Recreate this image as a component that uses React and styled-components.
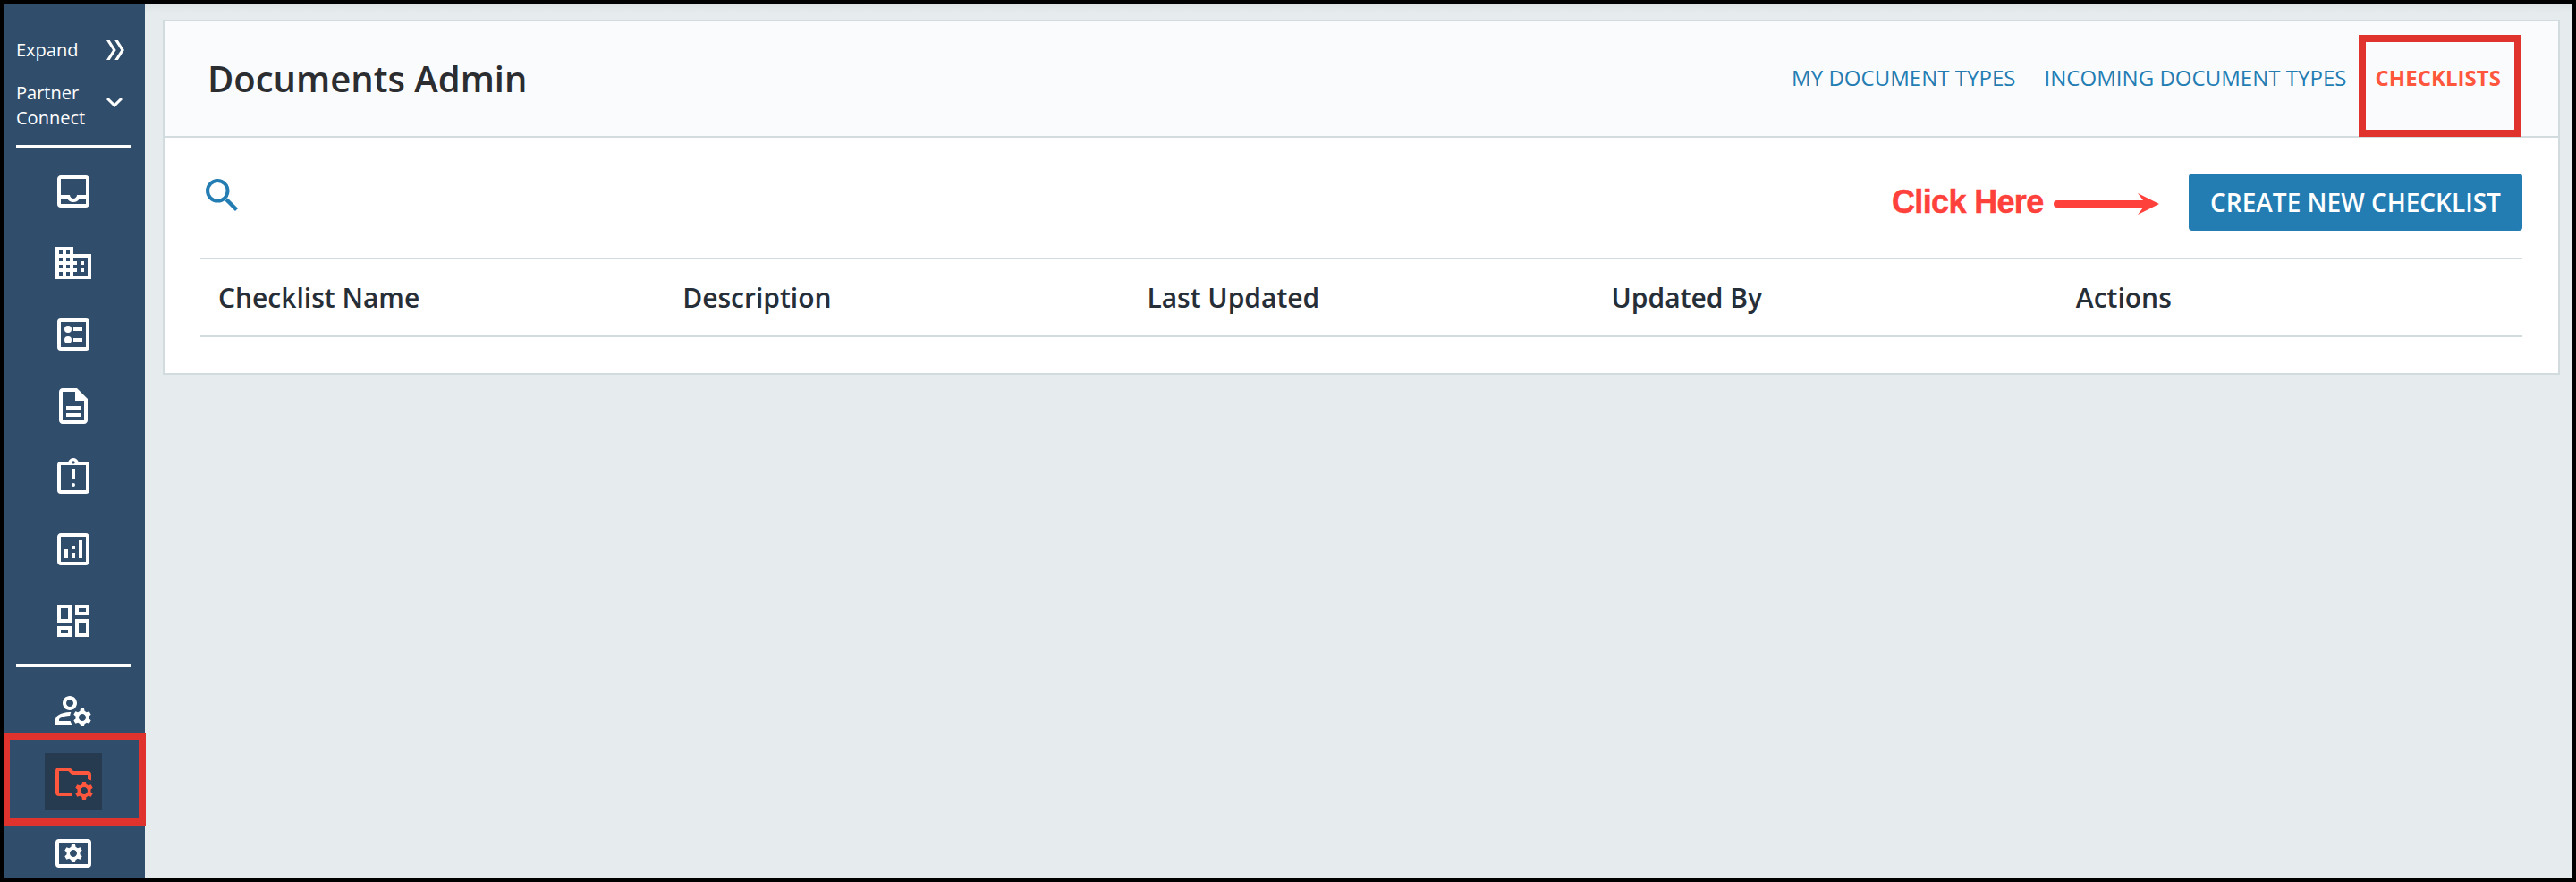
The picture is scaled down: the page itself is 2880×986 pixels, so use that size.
import React, { Component } from 'react';
import styled, { createGlobalStyle } from 'styled-components';
import {
  MdOutlineInbox,
  MdOutlineBusiness,
  MdOutlineDescription,
  MdOutlineAnalytics,
  MdOutlineDashboard,
  MdOutlineManageAccounts,
  MdExpandMore
} from 'react-icons/md';

// Styles
const GlobalStyle = createGlobalStyle`
  * {
    box-sizing: border-box;
  }

  body {
    margin: 0;
    font-family: 'Open Sans', 'Noto Sans', sans-serif;
  }
`;

const Wrapper = styled.div`
  position: relative;
  display: flex;
  width: 2880px;
  height: 986px;
  border: 4px solid #000;
  background: #e6ebee;
  overflow: hidden;
`;

const Sidebar = styled.div`
  display: flex;
  flex-direction: column;
  flex: none;
  width: 158px;
  padding: 38px 16px 0 14px;
  background: #304e6c;
  color: #fff;
`;

const SidebarRow = styled.div`
  display: flex;
  align-items: center;
  justify-content: space-between;
  flex: none;
  margin-bottom: ${props => props.$gap}px;
  padding-right: ${props => props.$inset}px;
  font-size: 20px;
  line-height: 28px;
`;

const CollapseIcon = styled(MdExpandMore)`
  margin-bottom: 8px;
`;

const Divider = styled.div`
  flex: none;
  height: 4px;
  background: #fff;
`;

const NavGroup = styled.div`
  display: flex;
  flex-direction: column;
  align-items: center;
  flex: none;
  gap: 16px;
  padding: 16px 0;
`;

const NavItem = styled.div`
  display: flex;
  align-items: center;
  justify-content: center;
  width: 64px;
  height: 64px;
  background: ${props => (props.$active ? '#263a50' : 'transparent')};
  color: ${props => (props.$active ? '#ff573d' : '#fff')};

  svg {
    width: 48px;
    height: 48px;
  }
`;

const Main = styled.div`
  flex: 1;
  padding: 18px 14px 0 20px;
  background: linear-gradient(#dce1e3, #e6ebee 10px);
`;

const Panel = styled.div`
  border: 2px solid #d2dcdf;
  background: #fff;
`;

const PanelHeader = styled.div`
  position: relative;
  display: flex;
  align-items: center;
  justify-content: space-between;
  height: 130px;
  padding: 0 64px 0 48px;
  border-bottom: 2px solid #d2dcdf;
  background: #fafbfd;
`;

const Title = styled.h1`
  margin: 0;
  padding-bottom: 2px;
  font-size: 40px;
  font-weight: 600;
  color: #2b2d31;
`;

const Tabs = styled.div`
  display: flex;
  gap: 32px;
  padding-bottom: 4px;
`;

const Tab = styled.a`
  font-size: 24px;
  font-weight: ${props => (props.$active ? 700 : 400)};
  color: ${props => (props.$active ? '#ff573d' : '#237db3')};
  letter-spacing: 0.03px;
  text-transform: uppercase;
`;

const PanelBody = styled.div`
  padding: 40px 40px 40px;
`;

const Toolbar = styled.div`
  display: flex;
  align-items: flex-start;
  height: 94px;
`;

const SearchButton = styled.div`
  flex: 1;
  color: #237db3;

  svg {
    display: block;
  }
`;

const Hint = styled.div`
  display: flex;
  align-items: center;
  height: 64px;
  margin-right: 33px;
  color: #ff413c;

  svg {
    margin-top: 4px;
  }
`;

const HintText = styled.span`
  width: 181px;
  font-family: 'Liberation Sans', sans-serif;
  font-size: 36px;
  font-weight: 700;
  letter-spacing: -0.65px;
  white-space: nowrap;
  -webkit-text-stroke: 0.5px #ff413c;
`;

const CreateButton = styled.div`
  display: flex;
  align-items: center;
  justify-content: center;
  width: 373px;
  height: 64px;
  border-radius: 4px;
  background: #237db3;
  color: #fff;
  font-size: 28px;
  font-weight: 600;
`;

const TableHead = styled.div`
  display: grid;
  grid-template-columns: repeat(5, 1fr);
  align-items: center;
  height: 89px;
  border-top: 2px solid #d2dcdf;
  border-bottom: 2px solid #d2dcdf;
`;

const HeadCell = styled.div`
  padding-left: 20px;
  font-size: 30px;
  font-weight: 600;
  color: #262e38;
`;

// Red frames that point the reader at a control
const Marker = styled.div`
  position: absolute;
  border: 8px solid #e0332e;
`;

const TabMarker = styled(Marker)`
  top: 15px;
  right: 41px;
  width: 182px;
  height: 114px;
`;

const SidebarMarker = styled(Marker)`
  top: 815px;
  left: -1px;
  width: 160px;
  height: 104px;
`;

// Icons
const GEAR =
  'M20.75 16c0-.22-.03-.42-.06-.63l1.14-1.01-1-1.73-1.45.49c-.32-.27-.68-.48-1.08-.63L18 11h-2l-.3 1.49c-.4.15-.76.36-1.08.63l-1.45-.49-1 1.73 1.14 1.01c-.03.21-.06.41-.06.63s.03.42.06.63l-1.14 1.01 1 1.73 1.45-.49c.32.27.68.48 1.08.63L16 21h2l.3-1.49c.4-.15.76-.36 1.08-.63l1.45.49 1-1.73-1.14-1.01c.03-.21.06-.41.06-.63zM17 18c-1.1 0-2-.9-2-2s.9-2 2-2 2 .9 2 2-.9 2-2 2z';

const BallotIcon = () => (
  <svg viewBox="0 0 24 24" fill="currentColor">
    <path
      fillRule="evenodd"
      d="M5 3h14a2 2 0 0 1 2 2v14a2 2 0 0 1-2 2H5a2 2 0 0 1-2-2V5a2 2 0 0 1 2-2zM5 5v14h14V5z"
    />
    <circle cx="9" cy="9" r="2" />
    <circle cx="9" cy="15" r="2" />
    <path d="M12 8h5v2h-5zM12 14h5v2h-5z" />
  </svg>
);

const AssignmentLateIcon = () => (
  <svg viewBox="0 0 24 24" fill="currentColor">
    <path
      fillRule="evenodd"
      d="M5 3h4.18C9.6 1.84 10.7 1 12 1s2.4.84 2.82 2H19a2 2 0 0 1 2 2v14a2 2 0 0 1-2 2H5a2 2 0 0 1-2-2V5a2 2 0 0 1 2-2zM5 5v14h14V5zM12 2.6a.85.85 0 1 0 0 1.7.85.85 0 0 0 0-1.7z"
    />
    <path d="M11 7h2v6h-2z" />
    <circle cx="12" cy="16" r="1" />
  </svg>
);

const FolderGearIcon = () => (
  <svg viewBox="0 0 24 24" fill="currentColor" overflow="visible">
    <path d="M4 4h6l2 2h8a2 2 0 0 1 2 2v3.3a6.5 6.5 0 0 0-2-.8V8h-8.83l-2-2H4v12h7.1c.06.7.2 1.37.45 2H4a2 2 0 0 1-2-2V6a2 2 0 0 1 2-2z" />
    <path d={GEAR} transform="translate(1 1)" />
  </svg>
);

const PanelGearIcon = () => (
  <svg viewBox="0 0 24 24" fill="currentColor">
    <path
      fillRule="evenodd"
      d="M4 4h16a2 2 0 0 1 2 2v12a2 2 0 0 1-2 2H4a2 2 0 0 1-2-2V6a2 2 0 0 1 2-2zM4 6v12h16V6z"
    />
    <path d={GEAR} transform="translate(-5 -4)" />
  </svg>
);

const DoubleChevron = () => (
  <svg width="20" height="22" viewBox="0 0 20 22" fill="currentColor">
    <path d="M0 0h3.7l7 11-7 11H0l7-11zM9.2 0h3.7l7 11-7 11H9.2l7-11z" />
  </svg>
);

const SearchIcon = () => (
  <svg width="48" height="48" viewBox="0 0 48 48" fill="none" stroke="currentColor">
    <circle cx="19.3" cy="19.3" r="11.3" strokeWidth="4" />
    <path d="M29 29l11.5 11.5" strokeWidth="4.4" />
  </svg>
);

const Arrow = () => (
  <svg width="118" height="24" viewBox="0 0 118 24" fill="currentColor">
    <path d="M4 8h96l-6-8 24 12-24 12 6-8H4a4 4 0 0 1 0-8z" />
  </svg>
);

const mainNav = [
  { id: 'inbox', icon: MdOutlineInbox },
  { id: 'business', icon: MdOutlineBusiness },
  { id: 'ballot', icon: BallotIcon },
  { id: 'description', icon: MdOutlineDescription },
  { id: 'late', icon: AssignmentLateIcon },
  { id: 'analytics', icon: MdOutlineAnalytics },
  { id: 'dashboard', icon: MdOutlineDashboard }
];

const adminNav = [
  { id: 'accounts', icon: MdOutlineManageAccounts },
  { id: 'documents', icon: FolderGearIcon },
  { id: 'settings', icon: PanelGearIcon }
];

const tabs = ['My Document Types', 'Incoming Document Types', 'Checklists'];

const columns = [
  'Checklist Name',
  'Description',
  'Last Updated',
  'Updated By',
  'Actions'
];

class App extends Component {
  constructor(props) {
    super(props);

    this.state = {
      activeNav: 'documents',
      activeTab: 'Checklists'
    };
  }

  NavLink = ({ id, icon: Icon }) => {
    const { activeNav } = this.state;
    return (
      <NavItem
        key={id}
        $active={activeNav === id}
        onClick={() => this.setState({ activeNav: id })}
      >
        <Icon />
      </NavItem>
    );
  };

  render() {
    const { activeTab } = this.state;

    return (
      <Wrapper>
        <GlobalStyle />
        <Sidebar>
          <SidebarRow $gap={20} $inset={7}>
            Expand
            <DoubleChevron />
          </SidebarRow>
          <SidebarRow $gap={16} $inset={0}>
            <span>
              Partner
              <br />
              Connect
            </span>
            <CollapseIcon size={36} />
          </SidebarRow>
          <Divider />
          <NavGroup>{mainNav.map(this.NavLink)}</NavGroup>
          <Divider />
          <NavGroup>{adminNav.map(this.NavLink)}</NavGroup>
        </Sidebar>

        <Main>
          <Panel>
            <PanelHeader>
              <Title>Documents Admin</Title>
              <Tabs>
                {tabs.map(tab => (
                  <Tab
                    key={tab}
                    $active={activeTab === tab}
                    onClick={() => this.setState({ activeTab: tab })}
                  >
                    {tab}
                  </Tab>
                ))}
              </Tabs>
              <TabMarker />
            </PanelHeader>

            <PanelBody>
              <Toolbar>
                <SearchButton>
                  <SearchIcon />
                </SearchButton>
                <Hint>
                  <HintText>Click Here</HintText>
                  <Arrow />
                </Hint>
                <CreateButton>CREATE NEW CHECKLIST</CreateButton>
              </Toolbar>
              <TableHead>
                {columns.map(column => (
                  <HeadCell key={column}>{column}</HeadCell>
                ))}
              </TableHead>
            </PanelBody>
          </Panel>
        </Main>
        <SidebarMarker />
      </Wrapper>
    );
  }
}

export default App;
